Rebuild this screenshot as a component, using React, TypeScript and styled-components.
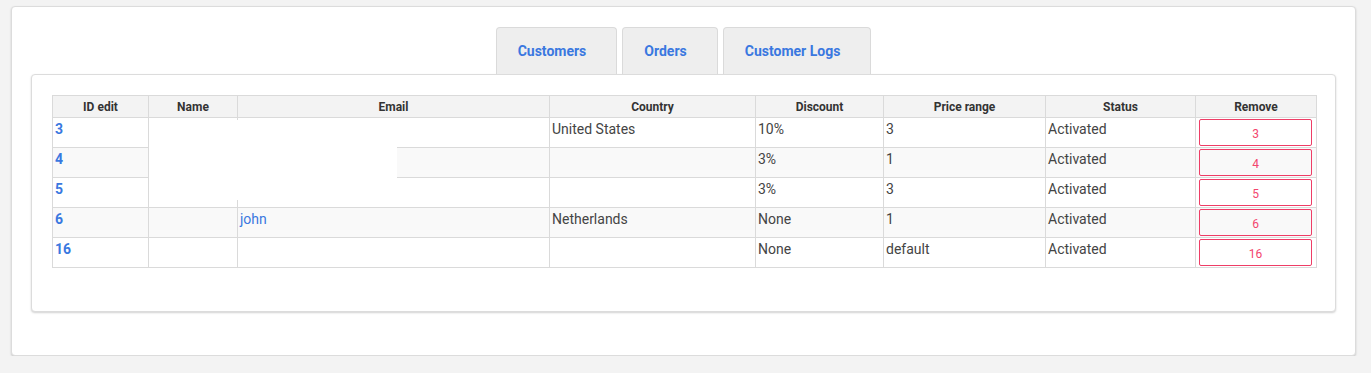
import React from "react";
import styled, { createGlobalStyle } from "styled-components";

const Global = createGlobalStyle`
  html, body { margin: 0; padding: 0; background: #f3f3f3; }
  body { font-family: Roboto, "Liberation Sans", Arial, sans-serif; color: #444; }
`;

const Page = styled.div`
  padding: 6px 15px 0 11px;
`;

const OuterCard = styled.div`
  background: #fff;
  border: 1px solid #dcdcdc;
  border-radius: 4px;
  box-shadow: 0 1px 2px rgba(0, 0, 0, 0.18);
  padding: 20px 19px 43px;
`;

const Tabs = styled.div`
  display: flex;
  justify-content: center;
  gap: 5px;
`;

const Tab = styled.div`
  height: 46px;
  padding: 0 30px 0 21px;
  display: flex;
  align-items: center;
  background: #eeeeee;
  border: 1px solid #dadada;
  border-bottom: none;
  border-radius: 4px 4px 0 0;
  color: #3a78e0;
  font-size: 14px;
  font-weight: 700;
`;

const InnerCard = styled.div`
  background: #fff;
  border: 1px solid #dcdcdc;
  border-radius: 4px;
  box-shadow: 0 1px 2px rgba(0, 0, 0, 0.18);
  padding: 20px 19px 43px 20px;
`;

const TableWrap = styled.div`
  position: relative;
`;

const Table = styled.table`
  width: 100%;
  border-collapse: collapse;
  table-layout: fixed;
  font-size: 14px;
`;

const Th = styled.th`
  background: #f3f3f3;
  border: 1px solid #dadada;
  font-size: 12px;
  font-weight: 700;
  color: #333;
  height: 21px;
  padding: 0 3px;
  text-align: center;
`;

const Tr = styled.tr<{ $alt: boolean }>`
  background: ${(p) => (p.$alt ? "#f9f9f9" : "#fff")};
`;

const Td = styled.td`
  border: 1px solid #dadada;
  height: 28px;
  padding: 1px 3px 0 2px;
  vertical-align: top;
  line-height: 20px;
  color: #444;
`;

const IdLink = styled.a`
  color: #3a78e0;
  font-weight: 700;
  text-decoration: none;
`;

const NameLink = styled.a`
  color: #3a78e0;
  text-decoration: none;
`;

const RemoveCell = styled.td`
  border: 1px solid #dadada;
  height: 27px;
  padding: 1px 4px 0 3px;
  vertical-align: top;
`;

const RemoveButton = styled.button`
  display: block;
  width: 100%;
  height: 27px;
  background: transparent;
  border: 1px solid #ee3d66;
  border-radius: 2px;
  color: #f3466e;
  font-family: Roboto, "Liberation Sans", Arial, sans-serif;
  font-size: 12px;
  padding: 2px 0 0;
`;

const Redaction = styled.div`
  position: absolute;
  left: 97px;
  top: 25px;
  width: 248px;
  height: 80px;
  background: #fff;
`;

type Row = {
  id: string;
  email?: string;
  country: string;
  discount: string;
  price: string;
  status: string;
};

const rows: Row[] = [
  { id: "3", country: "United States", discount: "10%", price: "3", status: "Activated" },
  { id: "4", country: "", discount: "3%", price: "1", status: "Activated" },
  { id: "5", country: "", discount: "3%", price: "3", status: "Activated" },
  { id: "6", email: "john", country: "Netherlands", discount: "None", price: "1", status: "Activated" },
  { id: "16", country: "", discount: "None", price: "default", status: "Activated" },
];

const widths = [96, 89, 312, 206, 128, 162, 150, 121];
const headers = ["ID edit", "Name", "Email", "Country", "Discount", "Price range", "Status", "Remove"];

export default function App() {
  return (
    <>
      <Global />
      <Page>
        <OuterCard>
          <Tabs>
            <Tab>Customers</Tab>
            <Tab>Orders</Tab>
            <Tab>Customer Logs</Tab>
          </Tabs>
          <InnerCard>
            <TableWrap>
              <Table>
                <colgroup>
                  {widths.map((w, i) => (
                    <col key={i} style={{ width: w }} />
                  ))}
                </colgroup>
                <thead>
                  <tr>
                    {headers.map((h) => (
                      <Th key={h}>{h}</Th>
                    ))}
                  </tr>
                </thead>
                <tbody>
                  {rows.map((r, i) => (
                    <Tr key={r.id} $alt={i % 2 === 1}>
                      <Td>
                        <IdLink href="#">{r.id}</IdLink>
                      </Td>
                      <Td />
                      <Td>{r.email ? <NameLink href="#">{r.email}</NameLink> : null}</Td>
                      <Td>{r.country}</Td>
                      <Td>{r.discount}</Td>
                      <Td>{r.price}</Td>
                      <Td>{r.status}</Td>
                      <RemoveCell>
                        <RemoveButton>{r.id}</RemoveButton>
                      </RemoveCell>
                    </Tr>
                  ))}
                </tbody>
              </Table>
              <Redaction />
            </TableWrap>
          </InnerCard>
        </OuterCard>
      </Page>
    </>
  );
}
